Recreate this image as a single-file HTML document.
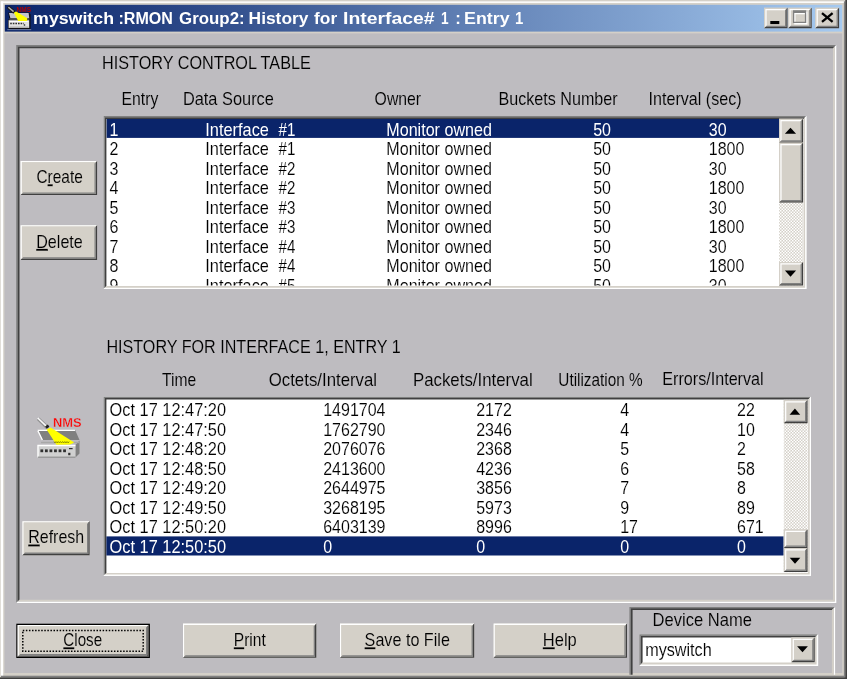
<!DOCTYPE html>
<html lang="en"><head><meta charset="utf-8"><title>myswitch :RMON Group2: History for Interface# 1 : Entry 1</title>
<style>
html,body{margin:0;padding:0;background:#d4d0c8;overflow:hidden}
body{width:847px;height:679px}
svg{display:block;font-family:"Liberation Sans",sans-serif;font-size:16px}
text{white-space:pre}
</style></head><body>
<svg width="847" height="679" viewBox="0 0 847 679">
<defs>
<linearGradient id="cap" x1="0" y1="0" x2="1" y2="0"><stop offset="0" stop-color="#0a246a"/><stop offset="1" stop-color="#a6caf0"/></linearGradient>
<pattern id="chk" width="3" height="3" patternUnits="userSpaceOnUse"><rect width="3" height="3" fill="#d4d0c8"/><rect width="1.5" height="1.5" fill="#fff"/><rect x="1.5" y="1.5" width="1.5" height="1.5" fill="#fff"/></pattern>
<filter id="soft" x="0" y="0" width="100%" height="100%" filterUnits="userSpaceOnUse" color-interpolation-filters="sRGB"><feGaussianBlur stdDeviation="0.28"/></filter>
</defs>
<g filter="url(#soft)">
<g id="window-frame">
<rect x="0" y="0" width="847" height="679" fill="#d4d0c8"/>
<rect x="0.9" y="1.4" width="844.3" height="1.5" fill="#ffffff"/>
<rect x="0.7" y="1.4" width="2.5" height="675.9" fill="#ffffff"/>
<rect x="843.9" y="1.3" width="1.4" height="676.1" fill="#808080"/>
<rect x="1" y="675.7" width="844.3" height="1.7" fill="#808080"/>
<rect x="845.3" y="0" width="1.7" height="679" fill="#404040"/>
<rect x="0" y="677.4" width="847" height="1.6" fill="#404040"/>
<rect x="4.5" y="33.4" width="837.7" height="639.6" fill="#bebcc0"/>
</g>
<g id="titlebar">
<rect x="4.8" y="4.8" width="837.4" height="26.8" fill="url(#cap)"/>
<rect x="764.1" y="7.7" width="23.4" height="20.5" fill="#d4d0c8"/>
<polygon points="764.1,7.7 787.5,7.7 786.25,8.95 765.35,8.95 765.35,26.95 764.1,28.2" fill="#d4d0c8"/>
<polygon points="787.5,7.7 787.5,28.2 764.1,28.2 765.35,26.95 786.25,26.95 786.25,8.95" fill="#404040"/>
<polygon points="765.35,8.95 786.25,8.95 785,10.2 766.6,10.2 766.6,25.7 765.35,26.95" fill="#ffffff"/>
<polygon points="786.25,8.95 786.25,26.95 765.35,26.95 766.6,25.7 785,25.7 785,10.2" fill="#808080"/>
<rect x="788.2" y="7.7" width="23.5" height="20.5" fill="#d4d0c8"/>
<polygon points="788.2,7.7 811.7,7.7 810.45,8.95 789.45,8.95 789.45,26.95 788.2,28.2" fill="#d4d0c8"/>
<polygon points="811.7,7.7 811.7,28.2 788.2,28.2 789.45,26.95 810.45,26.95 810.45,8.95" fill="#404040"/>
<polygon points="789.45,8.95 810.45,8.95 809.2,10.2 790.7,10.2 790.7,25.7 789.45,26.95" fill="#ffffff"/>
<polygon points="810.45,8.95 810.45,26.95 789.45,26.95 790.7,25.7 809.2,25.7 809.2,10.2" fill="#808080"/>
<rect x="815.3" y="7.7" width="23.8" height="20.5" fill="#d4d0c8"/>
<polygon points="815.3,7.7 839.1,7.7 837.85,8.95 816.55,8.95 816.55,26.95 815.3,28.2" fill="#d4d0c8"/>
<polygon points="839.1,7.7 839.1,28.2 815.3,28.2 816.55,26.95 837.85,26.95 837.85,8.95" fill="#404040"/>
<polygon points="816.55,8.95 837.85,8.95 836.6,10.2 817.8,10.2 817.8,25.7 816.55,26.95" fill="#ffffff"/>
<polygon points="837.85,8.95 837.85,26.95 816.55,26.95 817.8,25.7 836.6,25.7 836.6,10.2" fill="#808080"/>
<rect x="770.3" y="21" width="9" height="3.1" fill="#000"/>
<path d="M794.2 11.6H807.5V24.4H794.2Z M795.5 14.2V23.1H806.2V14.2Z" fill="#ffffff" fill-rule="evenodd"/>
<path d="M792.9 10.3H806.2V23.1H792.9Z M794.2 12.9V21.8H804.9V12.9Z" fill="#808080" fill-rule="evenodd"/>
<path d="M822 13.1L832.6 21.9M832.6 13.1L822 21.9" stroke="#000" stroke-width="2.3" fill="none"/>
<g id="title-icon">
<polygon points="8.2,12.4 29,12.4 30.6,14.5 30.6,28.9 9,28.9 8,27.5 8,20 9.4,18.8" fill="#101018"/>
<polygon points="9,12.9 28.6,12.9 29.3,18.3 10.4,18.3" fill="#c4c4cc"/>
<rect x="9.4" y="18.4" width="20" height="1.4" fill="#606060"/>
<rect x="8.6" y="20.2" width="20.6" height="7.7" fill="#e2e2e2"/>
<rect x="9.6" y="21" width="18.8" height="0.9" fill="#ffffff"/>
<path d="M10.2 23.5H23.8" stroke="#303030" stroke-width="1.3" stroke-dasharray="1.6 1" fill="none"/>
<rect x="23.8" y="24.3" width="1.4" height="1.4" fill="#303030"/>
<rect x="9.6" y="26.6" width="19" height="1.1" fill="#a8a8a8"/>
<polygon points="13.6,12.3 16.2,11.6 27.3,18.3 26.9,20.9 18.2,20.9" fill="#ffff00"/>
<path d="M7.9 6.9L14.4 12.4" stroke="#181818" stroke-width="3.4" fill="none"/>
<path d="M8.4 7.2L13.6 11.6" stroke="#b0b0b0" stroke-width="1.5" fill="none"/>
<rect x="7.3" y="29.3" width="23.9" height="0.8" fill="#8890a8"/>
<text transform="translate(16.6,11.9) scale(1,1.0)" font-size="7" fill="#b00000" textLength="14.4" lengthAdjust="spacingAndGlyphs" font-weight="bold">NMS</text>
</g>
<text y="24.1" font-weight="bold" fill="#fff" font-size="16"><tspan x="33.1" textLength="80.9" lengthAdjust="spacingAndGlyphs">myswitch</tspan> <tspan x="118.5" textLength="54.4" lengthAdjust="spacingAndGlyphs">:RMON</tspan> <tspan x="179.1" textLength="65.55" lengthAdjust="spacingAndGlyphs">Group2:</tspan> <tspan x="248.6" textLength="59.8" lengthAdjust="spacingAndGlyphs">History</tspan> <tspan x="314.1" textLength="23.05" lengthAdjust="spacingAndGlyphs">for</tspan> <tspan x="343.1" textLength="91.55" lengthAdjust="spacingAndGlyphs">Interface#</tspan> <tspan x="441.1" textLength="7.6" lengthAdjust="spacingAndGlyphs">1</tspan> <tspan x="455.35" textLength="5.55" lengthAdjust="spacingAndGlyphs">:</tspan> <tspan x="464.1" textLength="45.55" lengthAdjust="spacingAndGlyphs">Entry</tspan> <tspan x="514.9" textLength="8.3" lengthAdjust="spacingAndGlyphs">1</tspan></text>
</g>
<g id="main-panel">
<polygon points="16.2,45 836.3,45 834.8,46.5 17.7,46.5 17.7,601.5 16.2,603" fill="#808080"/>
<polygon points="836.3,45 836.3,603 16.2,603 17.7,601.5 834.8,601.5 834.8,46.5" fill="#ffffff"/>
<polygon points="17.7,46.5 834.8,46.5 833,48.3 19.5,48.3 19.5,599.7 17.7,601.5" fill="#404040"/>
<polygon points="834.8,46.5 834.8,601.5 17.7,601.5 19.5,599.7 833,599.7 833,48.3" fill="#d4d0c8"/>
</g>
<g id="history-control">
<text transform="translate(102,69.1) scale(1,1.19)" font-size="16" fill="#000" textLength="208.8" lengthAdjust="spacingAndGlyphs" stroke="#bebcc0" stroke-width="0.12">HISTORY CONTROL TABLE</text>
<text transform="translate(121.5,105) scale(1,1.19)" font-size="16" fill="#000" textLength="36.8" lengthAdjust="spacingAndGlyphs" stroke="#bebcc0" stroke-width="0.12">Entry</text>
<text transform="translate(182.9,105) scale(1,1.19)" font-size="16" fill="#000" textLength="91" lengthAdjust="spacingAndGlyphs" stroke="#bebcc0" stroke-width="0.12">Data Source</text>
<text transform="translate(374.6,105) scale(1,1.19)" font-size="16" fill="#000" textLength="46.5" lengthAdjust="spacingAndGlyphs" stroke="#bebcc0" stroke-width="0.12">Owner</text>
<text transform="translate(498.4,105) scale(1,1.19)" font-size="16" fill="#000" textLength="119.3" lengthAdjust="spacingAndGlyphs" stroke="#bebcc0" stroke-width="0.12">Buckets Number</text>
<text transform="translate(648.6,105) scale(1,1.19)" font-size="16" fill="#000" textLength="93" lengthAdjust="spacingAndGlyphs" stroke="#bebcc0" stroke-width="0.12">Interval (sec)</text>
<rect x="103.5" y="116" width="702.9" height="173" fill="#ffffff"/>
<polygon points="103.5,116 806.4,116 805.1,117.3 104.8,117.3 104.8,287.7 103.5,289" fill="#808080"/>
<polygon points="806.4,116 806.4,289 103.5,289 104.8,287.7 805.1,287.7 805.1,117.3" fill="#ffffff"/>
<polygon points="104.8,117.3 805.1,117.3 803.5,118.9 106.4,118.9 106.4,286.1 104.8,287.7" fill="#404040"/>
<polygon points="805.1,117.3 805.1,287.7 104.8,287.7 106.4,286.1 803.5,286.1 803.5,118.9" fill="#d4d0c8"/>
<clipPath id="c1"><rect x="106.4" y="118.8" width="672.7" height="166.59999999999997"/></clipPath>
<g clip-path="url(#c1)">
<rect x="106.4" y="118.8" width="672.7" height="19.1" fill="#0a246a"/>
<text transform="translate(109.6,135.6) scale(1,1.19)" font-size="16" fill="#fff">1</text>
<text transform="translate(205.3,135.6) scale(1,1.19)" font-size="16" fill="#fff" textLength="63.6" lengthAdjust="spacingAndGlyphs">Interface</text>
<text transform="translate(278.5,135.6) scale(1,1.19)" font-size="16" fill="#fff" textLength="16.8" lengthAdjust="spacingAndGlyphs">#1</text>
<text transform="translate(386.3,135.6) scale(1,1.19)" font-size="16" fill="#fff" textLength="105.6" lengthAdjust="spacingAndGlyphs">Monitor owned</text>
<text transform="translate(593.2,135.6) scale(1,1.19)" font-size="16" fill="#fff">50</text>
<text transform="translate(708.8,135.6) scale(1,1.19)" font-size="16" fill="#fff">30</text>
<text transform="translate(109.6,155.1) scale(1,1.19)" font-size="16" fill="#000" stroke="#ffffff" stroke-width="0.12">2</text>
<text transform="translate(205.3,155.1) scale(1,1.19)" font-size="16" fill="#000" textLength="63.6" lengthAdjust="spacingAndGlyphs" stroke="#ffffff" stroke-width="0.12">Interface</text>
<text transform="translate(278.5,155.1) scale(1,1.19)" font-size="16" fill="#000" textLength="16.8" lengthAdjust="spacingAndGlyphs" stroke="#ffffff" stroke-width="0.12">#1</text>
<text transform="translate(386.3,155.1) scale(1,1.19)" font-size="16" fill="#000" textLength="105.6" lengthAdjust="spacingAndGlyphs" stroke="#ffffff" stroke-width="0.12">Monitor owned</text>
<text transform="translate(593.2,155.1) scale(1,1.19)" font-size="16" fill="#000" stroke="#ffffff" stroke-width="0.12">50</text>
<text transform="translate(708.8,155.1) scale(1,1.19)" font-size="16" fill="#000" stroke="#ffffff" stroke-width="0.12">1800</text>
<text transform="translate(109.6,174.6) scale(1,1.19)" font-size="16" fill="#000" stroke="#ffffff" stroke-width="0.12">3</text>
<text transform="translate(205.3,174.6) scale(1,1.19)" font-size="16" fill="#000" textLength="63.6" lengthAdjust="spacingAndGlyphs" stroke="#ffffff" stroke-width="0.12">Interface</text>
<text transform="translate(278.5,174.6) scale(1,1.19)" font-size="16" fill="#000" textLength="16.8" lengthAdjust="spacingAndGlyphs" stroke="#ffffff" stroke-width="0.12">#2</text>
<text transform="translate(386.3,174.6) scale(1,1.19)" font-size="16" fill="#000" textLength="105.6" lengthAdjust="spacingAndGlyphs" stroke="#ffffff" stroke-width="0.12">Monitor owned</text>
<text transform="translate(593.2,174.6) scale(1,1.19)" font-size="16" fill="#000" stroke="#ffffff" stroke-width="0.12">50</text>
<text transform="translate(708.8,174.6) scale(1,1.19)" font-size="16" fill="#000" stroke="#ffffff" stroke-width="0.12">30</text>
<text transform="translate(109.6,194.1) scale(1,1.19)" font-size="16" fill="#000" stroke="#ffffff" stroke-width="0.12">4</text>
<text transform="translate(205.3,194.1) scale(1,1.19)" font-size="16" fill="#000" textLength="63.6" lengthAdjust="spacingAndGlyphs" stroke="#ffffff" stroke-width="0.12">Interface</text>
<text transform="translate(278.5,194.1) scale(1,1.19)" font-size="16" fill="#000" textLength="16.8" lengthAdjust="spacingAndGlyphs" stroke="#ffffff" stroke-width="0.12">#2</text>
<text transform="translate(386.3,194.1) scale(1,1.19)" font-size="16" fill="#000" textLength="105.6" lengthAdjust="spacingAndGlyphs" stroke="#ffffff" stroke-width="0.12">Monitor owned</text>
<text transform="translate(593.2,194.1) scale(1,1.19)" font-size="16" fill="#000" stroke="#ffffff" stroke-width="0.12">50</text>
<text transform="translate(708.8,194.1) scale(1,1.19)" font-size="16" fill="#000" stroke="#ffffff" stroke-width="0.12">1800</text>
<text transform="translate(109.6,213.6) scale(1,1.19)" font-size="16" fill="#000" stroke="#ffffff" stroke-width="0.12">5</text>
<text transform="translate(205.3,213.6) scale(1,1.19)" font-size="16" fill="#000" textLength="63.6" lengthAdjust="spacingAndGlyphs" stroke="#ffffff" stroke-width="0.12">Interface</text>
<text transform="translate(278.5,213.6) scale(1,1.19)" font-size="16" fill="#000" textLength="16.8" lengthAdjust="spacingAndGlyphs" stroke="#ffffff" stroke-width="0.12">#3</text>
<text transform="translate(386.3,213.6) scale(1,1.19)" font-size="16" fill="#000" textLength="105.6" lengthAdjust="spacingAndGlyphs" stroke="#ffffff" stroke-width="0.12">Monitor owned</text>
<text transform="translate(593.2,213.6) scale(1,1.19)" font-size="16" fill="#000" stroke="#ffffff" stroke-width="0.12">50</text>
<text transform="translate(708.8,213.6) scale(1,1.19)" font-size="16" fill="#000" stroke="#ffffff" stroke-width="0.12">30</text>
<text transform="translate(109.6,233.1) scale(1,1.19)" font-size="16" fill="#000" stroke="#ffffff" stroke-width="0.12">6</text>
<text transform="translate(205.3,233.1) scale(1,1.19)" font-size="16" fill="#000" textLength="63.6" lengthAdjust="spacingAndGlyphs" stroke="#ffffff" stroke-width="0.12">Interface</text>
<text transform="translate(278.5,233.1) scale(1,1.19)" font-size="16" fill="#000" textLength="16.8" lengthAdjust="spacingAndGlyphs" stroke="#ffffff" stroke-width="0.12">#3</text>
<text transform="translate(386.3,233.1) scale(1,1.19)" font-size="16" fill="#000" textLength="105.6" lengthAdjust="spacingAndGlyphs" stroke="#ffffff" stroke-width="0.12">Monitor owned</text>
<text transform="translate(593.2,233.1) scale(1,1.19)" font-size="16" fill="#000" stroke="#ffffff" stroke-width="0.12">50</text>
<text transform="translate(708.8,233.1) scale(1,1.19)" font-size="16" fill="#000" stroke="#ffffff" stroke-width="0.12">1800</text>
<text transform="translate(109.6,252.6) scale(1,1.19)" font-size="16" fill="#000" stroke="#ffffff" stroke-width="0.12">7</text>
<text transform="translate(205.3,252.6) scale(1,1.19)" font-size="16" fill="#000" textLength="63.6" lengthAdjust="spacingAndGlyphs" stroke="#ffffff" stroke-width="0.12">Interface</text>
<text transform="translate(278.5,252.6) scale(1,1.19)" font-size="16" fill="#000" textLength="16.8" lengthAdjust="spacingAndGlyphs" stroke="#ffffff" stroke-width="0.12">#4</text>
<text transform="translate(386.3,252.6) scale(1,1.19)" font-size="16" fill="#000" textLength="105.6" lengthAdjust="spacingAndGlyphs" stroke="#ffffff" stroke-width="0.12">Monitor owned</text>
<text transform="translate(593.2,252.6) scale(1,1.19)" font-size="16" fill="#000" stroke="#ffffff" stroke-width="0.12">50</text>
<text transform="translate(708.8,252.6) scale(1,1.19)" font-size="16" fill="#000" stroke="#ffffff" stroke-width="0.12">30</text>
<text transform="translate(109.6,272.1) scale(1,1.19)" font-size="16" fill="#000" stroke="#ffffff" stroke-width="0.12">8</text>
<text transform="translate(205.3,272.1) scale(1,1.19)" font-size="16" fill="#000" textLength="63.6" lengthAdjust="spacingAndGlyphs" stroke="#ffffff" stroke-width="0.12">Interface</text>
<text transform="translate(278.5,272.1) scale(1,1.19)" font-size="16" fill="#000" textLength="16.8" lengthAdjust="spacingAndGlyphs" stroke="#ffffff" stroke-width="0.12">#4</text>
<text transform="translate(386.3,272.1) scale(1,1.19)" font-size="16" fill="#000" textLength="105.6" lengthAdjust="spacingAndGlyphs" stroke="#ffffff" stroke-width="0.12">Monitor owned</text>
<text transform="translate(593.2,272.1) scale(1,1.19)" font-size="16" fill="#000" stroke="#ffffff" stroke-width="0.12">50</text>
<text transform="translate(708.8,272.1) scale(1,1.19)" font-size="16" fill="#000" stroke="#ffffff" stroke-width="0.12">1800</text>
<text transform="translate(109.6,291.6) scale(1,1.19)" font-size="16" fill="#000" stroke="#ffffff" stroke-width="0.12">9</text>
<text transform="translate(205.3,291.6) scale(1,1.19)" font-size="16" fill="#000" textLength="63.6" lengthAdjust="spacingAndGlyphs" stroke="#ffffff" stroke-width="0.12">Interface</text>
<text transform="translate(278.5,291.6) scale(1,1.19)" font-size="16" fill="#000" textLength="16.8" lengthAdjust="spacingAndGlyphs" stroke="#ffffff" stroke-width="0.12">#5</text>
<text transform="translate(386.3,291.6) scale(1,1.19)" font-size="16" fill="#000" textLength="105.6" lengthAdjust="spacingAndGlyphs" stroke="#ffffff" stroke-width="0.12">Monitor owned</text>
<text transform="translate(593.2,291.6) scale(1,1.19)" font-size="16" fill="#000" stroke="#ffffff" stroke-width="0.12">50</text>
<text transform="translate(708.8,291.6) scale(1,1.19)" font-size="16" fill="#000" stroke="#ffffff" stroke-width="0.12">30</text>
</g>
<rect x="779.1" y="118.8" width="24" height="166.6" fill="url(#chk)"/>
<rect x="779.1" y="118.8" width="24" height="23.9" fill="#d4d0c8"/>
<polygon points="779.1,118.8 803.1,118.8 801.85,120.05 780.35,120.05 780.35,141.45 779.1,142.7" fill="#d4d0c8"/>
<polygon points="803.1,118.8 803.1,142.7 779.1,142.7 780.35,141.45 801.85,141.45 801.85,120.05" fill="#404040"/>
<polygon points="780.35,120.05 801.85,120.05 800.6,121.3 781.6,121.3 781.6,140.2 780.35,141.45" fill="#ffffff"/>
<polygon points="801.85,120.05 801.85,141.45 780.35,141.45 781.6,140.2 800.6,140.2 800.6,121.3" fill="#808080"/>
<polygon points="790.5,127.7 796.1,133.8 784.9,133.8" fill="#000"/>
<rect x="779.1" y="142.7" width="24" height="59.7" fill="#d4d0c8"/>
<polygon points="779.1,142.7 803.1,142.7 801.85,143.95 780.35,143.95 780.35,201.15 779.1,202.4" fill="#d4d0c8"/>
<polygon points="803.1,142.7 803.1,202.4 779.1,202.4 780.35,201.15 801.85,201.15 801.85,143.95" fill="#404040"/>
<polygon points="780.35,143.95 801.85,143.95 800.6,145.2 781.6,145.2 781.6,199.9 780.35,201.15" fill="#ffffff"/>
<polygon points="801.85,143.95 801.85,201.15 780.35,201.15 781.6,199.9 800.6,199.9 800.6,145.2" fill="#808080"/>
<rect x="779.1" y="262" width="24" height="23.4" fill="#d4d0c8"/>
<polygon points="779.1,262 803.1,262 801.85,263.25 780.35,263.25 780.35,284.15 779.1,285.4" fill="#d4d0c8"/>
<polygon points="803.1,262 803.1,285.4 779.1,285.4 780.35,284.15 801.85,284.15 801.85,263.25" fill="#404040"/>
<polygon points="780.35,263.25 801.85,263.25 800.6,264.5 781.6,264.5 781.6,282.9 780.35,284.15" fill="#ffffff"/>
<polygon points="801.85,263.25 801.85,284.15 780.35,284.15 781.6,282.9 800.6,282.9 800.6,264.5" fill="#808080"/>
<polygon points="784.9,270.6 796.1,270.6 790.5,276.8" fill="#000"/>
</g>
<g id="side-buttons">
<rect x="20.6" y="160.9" width="76.5" height="34.2" fill="#d4d0c8"/>
<polygon points="20.6,160.9 97.1,160.9 95.8,162.2 21.9,162.2 21.9,193.8 20.6,195.1" fill="#ffffff"/>
<polygon points="97.1,160.9 97.1,195.1 20.6,195.1 21.9,193.8 95.8,193.8 95.8,162.2" fill="#404040"/>
<polygon points="21.9,162.2 95.8,162.2 94.5,163.5 23.2,163.5 23.2,192.5 21.9,193.8" fill="#d4d0c8"/>
<polygon points="95.8,162.2 95.8,193.8 21.9,193.8 23.2,192.5 94.5,192.5 94.5,163.5" fill="#808080"/>
<text transform="translate(36.4,183.2) scale(1,1.19)" font-size="16" fill="#000" textLength="46.4" lengthAdjust="spacingAndGlyphs" stroke="#d4d0c8" stroke-width="0.12">C<tspan text-decoration="underline">r</tspan>eate</text>
<rect x="20.6" y="225.2" width="76.5" height="34.7" fill="#d4d0c8"/>
<polygon points="20.6,225.2 97.1,225.2 95.8,226.5 21.9,226.5 21.9,258.6 20.6,259.9" fill="#ffffff"/>
<polygon points="97.1,225.2 97.1,259.9 20.6,259.9 21.9,258.6 95.8,258.6 95.8,226.5" fill="#404040"/>
<polygon points="21.9,226.5 95.8,226.5 94.5,227.8 23.2,227.8 23.2,257.3 21.9,258.6" fill="#d4d0c8"/>
<polygon points="95.8,226.5 95.8,258.6 21.9,258.6 23.2,257.3 94.5,257.3 94.5,227.8" fill="#808080"/>
<text transform="translate(36.2,247.8) scale(1,1.19)" font-size="16" fill="#000" textLength="46.6" lengthAdjust="spacingAndGlyphs" stroke="#d4d0c8" stroke-width="0.12"><tspan text-decoration="underline">D</tspan>elete</text>
<rect x="22.4" y="521.3" width="67.2" height="33.9" fill="#d4d0c8"/>
<polygon points="22.4,521.3 89.6,521.3 88.3,522.6 23.7,522.6 23.7,553.9 22.4,555.2" fill="#ffffff"/>
<polygon points="89.6,521.3 89.6,555.2 22.4,555.2 23.7,553.9 88.3,553.9 88.3,522.6" fill="#404040"/>
<polygon points="23.7,522.6 88.3,522.6 87,523.9 25,523.9 25,552.6 23.7,553.9" fill="#d4d0c8"/>
<polygon points="88.3,522.6 88.3,553.9 23.7,553.9 25,552.6 87,552.6 87,523.9" fill="#808080"/>
<text transform="translate(28.2,543.4) scale(1,1.19)" font-size="16" fill="#000" textLength="56" lengthAdjust="spacingAndGlyphs" stroke="#d4d0c8" stroke-width="0.12"><tspan text-decoration="underline">R</tspan>efresh</text>
</g>
<g id="history-data">
<text transform="translate(106.4,352.7) scale(1,1.19)" font-size="16" fill="#000" textLength="294.3" lengthAdjust="spacingAndGlyphs" stroke="#bebcc0" stroke-width="0.12">HISTORY FOR INTERFACE 1, ENTRY 1</text>
<text transform="translate(162,385.8) scale(1,1.19)" font-size="16" fill="#000" textLength="34.2" lengthAdjust="spacingAndGlyphs" stroke="#bebcc0" stroke-width="0.12">Time</text>
<text transform="translate(268.7,385.8) scale(1,1.19)" font-size="16" fill="#000" textLength="108.4" lengthAdjust="spacingAndGlyphs" stroke="#bebcc0" stroke-width="0.12">Octets/Interval</text>
<text transform="translate(412.9,385.8) scale(1,1.19)" font-size="16" fill="#000" textLength="119.8" lengthAdjust="spacingAndGlyphs" stroke="#bebcc0" stroke-width="0.12">Packets/Interval</text>
<text transform="translate(558.3,385.8) scale(1,1.19)" font-size="16" fill="#000" textLength="84.4" lengthAdjust="spacingAndGlyphs" stroke="#bebcc0" stroke-width="0.12">Utilization %</text>
<text transform="translate(662.3,384.5) scale(1,1.19)" font-size="16" fill="#000" textLength="101.3" lengthAdjust="spacingAndGlyphs" stroke="#bebcc0" stroke-width="0.12">Errors/Interval</text>
<rect x="103.5" y="396.7" width="707.5" height="179.1" fill="#ffffff"/>
<polygon points="103.5,396.7 811,396.7 809.7,398 104.8,398 104.8,574.5 103.5,575.8" fill="#808080"/>
<polygon points="811,396.7 811,575.8 103.5,575.8 104.8,574.5 809.7,574.5 809.7,398" fill="#ffffff"/>
<polygon points="104.8,398 809.7,398 808.1,399.6 106.4,399.6 106.4,572.9 104.8,574.5" fill="#404040"/>
<polygon points="809.7,398 809.7,574.5 104.8,574.5 106.4,572.9 808.1,572.9 808.1,399.6" fill="#d4d0c8"/>
<text transform="translate(109.6,416.4) scale(1,1.19)" font-size="16" fill="#000" textLength="116.4" lengthAdjust="spacingAndGlyphs" stroke="#ffffff" stroke-width="0.12">Oct 17 12:47:20</text>
<text transform="translate(323.2,416.4) scale(1,1.19)" font-size="16" fill="#000" stroke="#ffffff" stroke-width="0.12">1491704</text>
<text transform="translate(476.2,416.4) scale(1,1.19)" font-size="16" fill="#000" stroke="#ffffff" stroke-width="0.12">2172</text>
<text transform="translate(620.2,416.4) scale(1,1.19)" font-size="16" fill="#000" stroke="#ffffff" stroke-width="0.12">4</text>
<text transform="translate(737,416.4) scale(1,1.19)" font-size="16" fill="#000" stroke="#ffffff" stroke-width="0.12">22</text>
<text transform="translate(109.6,435.9) scale(1,1.19)" font-size="16" fill="#000" textLength="116.4" lengthAdjust="spacingAndGlyphs" stroke="#ffffff" stroke-width="0.12">Oct 17 12:47:50</text>
<text transform="translate(323.2,435.9) scale(1,1.19)" font-size="16" fill="#000" stroke="#ffffff" stroke-width="0.12">1762790</text>
<text transform="translate(476.2,435.9) scale(1,1.19)" font-size="16" fill="#000" stroke="#ffffff" stroke-width="0.12">2346</text>
<text transform="translate(620.2,435.9) scale(1,1.19)" font-size="16" fill="#000" stroke="#ffffff" stroke-width="0.12">4</text>
<text transform="translate(737,435.9) scale(1,1.19)" font-size="16" fill="#000" stroke="#ffffff" stroke-width="0.12">10</text>
<text transform="translate(109.6,455.4) scale(1,1.19)" font-size="16" fill="#000" textLength="116.4" lengthAdjust="spacingAndGlyphs" stroke="#ffffff" stroke-width="0.12">Oct 17 12:48:20</text>
<text transform="translate(323.2,455.4) scale(1,1.19)" font-size="16" fill="#000" stroke="#ffffff" stroke-width="0.12">2076076</text>
<text transform="translate(476.2,455.4) scale(1,1.19)" font-size="16" fill="#000" stroke="#ffffff" stroke-width="0.12">2368</text>
<text transform="translate(620.2,455.4) scale(1,1.19)" font-size="16" fill="#000" stroke="#ffffff" stroke-width="0.12">5</text>
<text transform="translate(737,455.4) scale(1,1.19)" font-size="16" fill="#000" stroke="#ffffff" stroke-width="0.12">2</text>
<text transform="translate(109.6,474.9) scale(1,1.19)" font-size="16" fill="#000" textLength="116.4" lengthAdjust="spacingAndGlyphs" stroke="#ffffff" stroke-width="0.12">Oct 17 12:48:50</text>
<text transform="translate(323.2,474.9) scale(1,1.19)" font-size="16" fill="#000" stroke="#ffffff" stroke-width="0.12">2413600</text>
<text transform="translate(476.2,474.9) scale(1,1.19)" font-size="16" fill="#000" stroke="#ffffff" stroke-width="0.12">4236</text>
<text transform="translate(620.2,474.9) scale(1,1.19)" font-size="16" fill="#000" stroke="#ffffff" stroke-width="0.12">6</text>
<text transform="translate(737,474.9) scale(1,1.19)" font-size="16" fill="#000" stroke="#ffffff" stroke-width="0.12">58</text>
<text transform="translate(109.6,494.4) scale(1,1.19)" font-size="16" fill="#000" textLength="116.4" lengthAdjust="spacingAndGlyphs" stroke="#ffffff" stroke-width="0.12">Oct 17 12:49:20</text>
<text transform="translate(323.2,494.4) scale(1,1.19)" font-size="16" fill="#000" stroke="#ffffff" stroke-width="0.12">2644975</text>
<text transform="translate(476.2,494.4) scale(1,1.19)" font-size="16" fill="#000" stroke="#ffffff" stroke-width="0.12">3856</text>
<text transform="translate(620.2,494.4) scale(1,1.19)" font-size="16" fill="#000" stroke="#ffffff" stroke-width="0.12">7</text>
<text transform="translate(737,494.4) scale(1,1.19)" font-size="16" fill="#000" stroke="#ffffff" stroke-width="0.12">8</text>
<text transform="translate(109.6,513.9) scale(1,1.19)" font-size="16" fill="#000" textLength="116.4" lengthAdjust="spacingAndGlyphs" stroke="#ffffff" stroke-width="0.12">Oct 17 12:49:50</text>
<text transform="translate(323.2,513.9) scale(1,1.19)" font-size="16" fill="#000" stroke="#ffffff" stroke-width="0.12">3268195</text>
<text transform="translate(476.2,513.9) scale(1,1.19)" font-size="16" fill="#000" stroke="#ffffff" stroke-width="0.12">5973</text>
<text transform="translate(620.2,513.9) scale(1,1.19)" font-size="16" fill="#000" stroke="#ffffff" stroke-width="0.12">9</text>
<text transform="translate(737,513.9) scale(1,1.19)" font-size="16" fill="#000" stroke="#ffffff" stroke-width="0.12">89</text>
<text transform="translate(109.6,533.4) scale(1,1.19)" font-size="16" fill="#000" textLength="116.4" lengthAdjust="spacingAndGlyphs" stroke="#ffffff" stroke-width="0.12">Oct 17 12:50:20</text>
<text transform="translate(323.2,533.4) scale(1,1.19)" font-size="16" fill="#000" stroke="#ffffff" stroke-width="0.12">6403139</text>
<text transform="translate(476.2,533.4) scale(1,1.19)" font-size="16" fill="#000" stroke="#ffffff" stroke-width="0.12">8996</text>
<text transform="translate(620.2,533.4) scale(1,1.19)" font-size="16" fill="#000" stroke="#ffffff" stroke-width="0.12">17</text>
<text transform="translate(737,533.4) scale(1,1.19)" font-size="16" fill="#000" stroke="#ffffff" stroke-width="0.12">671</text>
<rect x="106.4" y="536.4" width="677.4" height="19.1" fill="#0a246a"/>
<text transform="translate(109.6,552.9) scale(1,1.19)" font-size="16" fill="#fff" textLength="116.4" lengthAdjust="spacingAndGlyphs">Oct 17 12:50:50</text>
<text transform="translate(323.2,552.9) scale(1,1.19)" font-size="16" fill="#fff">0</text>
<text transform="translate(476.2,552.9) scale(1,1.19)" font-size="16" fill="#fff">0</text>
<text transform="translate(620.2,552.9) scale(1,1.19)" font-size="16" fill="#fff">0</text>
<text transform="translate(737,552.9) scale(1,1.19)" font-size="16" fill="#fff">0</text>
<rect x="783.8" y="399.9" width="23.7" height="172.2" fill="url(#chk)"/>
<rect x="783.8" y="399.9" width="23.7" height="23.4" fill="#d4d0c8"/>
<polygon points="783.8,399.9 807.5,399.9 806.25,401.15 785.05,401.15 785.05,422.05 783.8,423.3" fill="#d4d0c8"/>
<polygon points="807.5,399.9 807.5,423.3 783.8,423.3 785.05,422.05 806.25,422.05 806.25,401.15" fill="#404040"/>
<polygon points="785.05,401.15 806.25,401.15 805,402.4 786.3,402.4 786.3,420.8 785.05,422.05" fill="#ffffff"/>
<polygon points="806.25,401.15 806.25,422.05 785.05,422.05 786.3,420.8 805,420.8 805,402.4" fill="#808080"/>
<polygon points="794.9,408.5 800.2,414.8 789.6,414.8" fill="#000"/>
<rect x="783.8" y="529.4" width="23.7" height="18.7" fill="#d4d0c8"/>
<polygon points="783.8,529.4 807.5,529.4 806.25,530.65 785.05,530.65 785.05,546.85 783.8,548.1" fill="#d4d0c8"/>
<polygon points="807.5,529.4 807.5,548.1 783.8,548.1 785.05,546.85 806.25,546.85 806.25,530.65" fill="#404040"/>
<polygon points="785.05,530.65 806.25,530.65 805,531.9 786.3,531.9 786.3,545.6 785.05,546.85" fill="#ffffff"/>
<polygon points="806.25,530.65 806.25,546.85 785.05,546.85 786.3,545.6 805,545.6 805,531.9" fill="#808080"/>
<rect x="783.8" y="548.1" width="23.7" height="24" fill="#d4d0c8"/>
<polygon points="783.8,548.1 807.5,548.1 806.25,549.35 785.05,549.35 785.05,570.85 783.8,572.1" fill="#d4d0c8"/>
<polygon points="807.5,548.1 807.5,572.1 783.8,572.1 785.05,570.85 806.25,570.85 806.25,549.35" fill="#404040"/>
<polygon points="785.05,549.35 806.25,549.35 805,550.6 786.3,550.6 786.3,569.6 785.05,570.85" fill="#ffffff"/>
<polygon points="806.25,549.35 806.25,570.85 785.05,570.85 786.3,569.6 805,569.6 805,550.6" fill="#808080"/>
<polygon points="789.7,557.7 800.3,557.7 795,563.8" fill="#000"/>
</g>
<g id="nms-icon">
<polygon points="37.4,430.2 75.2,430.2 79.5,440 42.3,440" fill="#808080"/>
<path d="M37.6 430.4H75M37.8 430.6L42.4 440" stroke="#fff" stroke-width="1.3" fill="none"/>
<polygon points="75.4,444.9 79.5,440.6 79.5,453.4 75.4,457.6" fill="#808080"/>
<rect x="37.4" y="444.9" width="38" height="12.7" fill="#d0d0d0"/>
<path d="M37.4 445.5H75.4M38 445V457.4" stroke="#fff" stroke-width="1.3" fill="none"/>
<rect x="37.8" y="456.6" width="37.6" height="1.2" fill="#909090"/>
<rect x="41" y="441.8" width="38" height="1.4" fill="#a8a8a8"/>
<rect x="40.4" y="449.4" width="2.8" height="2.8" fill="#303030"/>
<rect x="44.95" y="449.4" width="2.8" height="2.8" fill="#303030"/>
<rect x="49.5" y="449.4" width="2.8" height="2.8" fill="#303030"/>
<rect x="54.05" y="449.4" width="2.8" height="2.8" fill="#303030"/>
<rect x="58.6" y="449.4" width="2.8" height="2.8" fill="#303030"/>
<rect x="63.15" y="449.4" width="2.8" height="2.8" fill="#303030"/>
<rect x="69" y="448" width="3.6" height="1.2" fill="#303030"/>
<rect x="68.2" y="452.8" width="2.2" height="2.4" fill="#303030"/>
<polygon points="46.6,429.6 50.6,427.4 74.2,442.4 70,444.6 56.4,444.8" fill="#ffff00"/>
<path d="M54 441.5l1 1.5 1-1.5 1.2 1.5 1-1.5 1.2 1.5 1-1.5 1.2 1.5 1-1.5 1.2 1.5 1-1.5 1.2 1.5 1-1.5 1.2 1.5 1-1.5" stroke="#808000" stroke-width=".8" fill="none"/>
<path d="M38.2 418.8L47.4 427.6" stroke="#909090" stroke-width="3.6" fill="none"/>
<path d="M37.8 418.0L46 425.8" stroke="#f8f8f8" stroke-width="1.7" fill="none"/>
<path d="M46 427.6L48.6 425.6" stroke="#202020" stroke-width="2.6" fill="none"/>
<text transform="translate(53,427) scale(1,1.0)" font-size="13" fill="#ff0000" textLength="28.6" lengthAdjust="spacingAndGlyphs" font-weight="bold" stroke="#bebcc0" stroke-width="0.35">NMS</text>
</g>
<g id="bottom-buttons">
<rect x="16.3" y="623.7" width="133.6" height="34.3" fill="#000"/>
<rect x="17.6" y="625" width="131" height="31.7" fill="#d4d0c8"/>
<polygon points="17.6,625 148.6,625 147.3,626.3 18.9,626.3 18.9,655.4 17.6,656.7" fill="#ffffff"/>
<polygon points="148.6,625 148.6,656.7 17.6,656.7 18.9,655.4 147.3,655.4 147.3,626.3" fill="#404040"/>
<polygon points="18.9,626.3 147.3,626.3 146,627.6 20.2,627.6 20.2,654.1 18.9,655.4" fill="#d4d0c8"/>
<polygon points="147.3,626.3 147.3,655.4 18.9,655.4 20.2,654.1 146,654.1 146,627.6" fill="#808080"/>
<rect x="22.8" y="630.5" width="120.4" height="20.7" fill="none" stroke="#000" stroke-width="1.5" stroke-dasharray="1.5 1.57" stroke-dashoffset="0"/>
<text transform="translate(63.3,646.2) scale(1,1.19)" font-size="16" fill="#000" textLength="38.8" lengthAdjust="spacingAndGlyphs" stroke="#d4d0c8" stroke-width="0.12"><tspan text-decoration="underline">C</tspan>lose</text>
<rect x="183" y="623.6" width="133.3" height="34.2" fill="#d4d0c8"/>
<polygon points="183,623.6 316.3,623.6 315,624.9 184.3,624.9 184.3,656.5 183,657.8" fill="#ffffff"/>
<polygon points="316.3,623.6 316.3,657.8 183,657.8 184.3,656.5 315,656.5 315,624.9" fill="#404040"/>
<polygon points="184.3,624.9 315,624.9 313.7,626.2 185.6,626.2 185.6,655.2 184.3,656.5" fill="#d4d0c8"/>
<polygon points="315,624.9 315,656.5 184.3,656.5 185.6,655.2 313.7,655.2 313.7,626.2" fill="#808080"/>
<text transform="translate(233.8,646.2) scale(1,1.19)" font-size="16" fill="#000" textLength="32" lengthAdjust="spacingAndGlyphs" stroke="#d4d0c8" stroke-width="0.12"><tspan text-decoration="underline">P</tspan>rint</text>
<rect x="340" y="623.6" width="134.2" height="34.2" fill="#d4d0c8"/>
<polygon points="340,623.6 474.2,623.6 472.9,624.9 341.3,624.9 341.3,656.5 340,657.8" fill="#ffffff"/>
<polygon points="474.2,623.6 474.2,657.8 340,657.8 341.3,656.5 472.9,656.5 472.9,624.9" fill="#404040"/>
<polygon points="341.3,624.9 472.9,624.9 471.6,626.2 342.6,626.2 342.6,655.2 341.3,656.5" fill="#d4d0c8"/>
<polygon points="472.9,624.9 472.9,656.5 341.3,656.5 342.6,655.2 471.6,655.2 471.6,626.2" fill="#808080"/>
<text transform="translate(364.6,646.2) scale(1,1.19)" font-size="16" fill="#000" textLength="85.3" lengthAdjust="spacingAndGlyphs" stroke="#d4d0c8" stroke-width="0.12"><tspan text-decoration="underline">S</tspan>ave to File</text>
<rect x="493.6" y="623.6" width="133.4" height="34.2" fill="#d4d0c8"/>
<polygon points="493.6,623.6 627,623.6 625.7,624.9 494.9,624.9 494.9,656.5 493.6,657.8" fill="#ffffff"/>
<polygon points="627,623.6 627,657.8 493.6,657.8 494.9,656.5 625.7,656.5 625.7,624.9" fill="#404040"/>
<polygon points="494.9,624.9 625.7,624.9 624.4,626.2 496.2,626.2 496.2,655.2 494.9,656.5" fill="#d4d0c8"/>
<polygon points="625.7,624.9 625.7,656.5 494.9,656.5 496.2,655.2 624.4,655.2 624.4,626.2" fill="#808080"/>
<text transform="translate(542.8,646.2) scale(1,1.19)" font-size="16" fill="#000" textLength="34" lengthAdjust="spacingAndGlyphs" stroke="#d4d0c8" stroke-width="0.12"><tspan text-decoration="underline">H</tspan>elp</text>
</g>
<g id="device-name">
<clipPath id="cdev"><rect x="4.3" y="600" width="837.9" height="674.8" transform="translate(0,-600)"/></clipPath>
<g clip-path="url(#cdev)">
<polygon points="629.4,606.9 835.1,606.9 833.7,608.3 630.8,608.3 630.8,688.6 629.4,690" fill="#808080"/>
<polygon points="835.1,606.9 835.1,690 629.4,690 630.8,688.6 833.7,688.6 833.7,608.3" fill="#ffffff"/>
<polygon points="630.8,608.3 833.7,608.3 831.9,610.1 632.6,610.1 632.6,686.8 630.8,688.6" fill="#404040"/>
<polygon points="833.7,608.3 833.7,688.6 630.8,688.6 632.6,686.8 831.9,686.8 831.9,610.1" fill="#d4d0c8"/>
</g>
<text transform="translate(652.6,626.4) scale(1,1.19)" font-size="16" fill="#000" textLength="99.4" lengthAdjust="spacingAndGlyphs" stroke="#bebcc0" stroke-width="0.12">Device Name</text>
<rect x="639.3" y="634.2" width="178.8" height="31.7" fill="#ffffff"/>
<polygon points="639.3,634.2 818.1,634.2 816.6,635.7 640.8,635.7 640.8,664.4 639.3,665.9" fill="#808080"/>
<polygon points="818.1,634.2 818.1,665.9 639.3,665.9 640.8,664.4 816.6,664.4 816.6,635.7" fill="#ffffff"/>
<polygon points="640.8,635.7 816.6,635.7 814.8,637.5 642.6,637.5 642.6,662.6 640.8,664.4" fill="#404040"/>
<polygon points="816.6,635.7 816.6,664.4 640.8,664.4 642.6,662.6 814.8,662.6 814.8,637.5" fill="#d4d0c8"/>
<rect x="791.4" y="637.5" width="23.3" height="24.8" fill="#d4d0c8"/>
<polygon points="791.4,637.5 814.7,637.5 813.45,638.75 792.65,638.75 792.65,661.05 791.4,662.3" fill="#d4d0c8"/>
<polygon points="814.7,637.5 814.7,662.3 791.4,662.3 792.65,661.05 813.45,661.05 813.45,638.75" fill="#404040"/>
<polygon points="792.65,638.75 813.45,638.75 812.2,640 793.9,640 793.9,659.8 792.65,661.05" fill="#ffffff"/>
<polygon points="813.45,638.75 813.45,661.05 792.65,661.05 793.9,659.8 812.2,659.8 812.2,640" fill="#808080"/>
<polygon points="797.1,646.2 807.9,646.2 802.5,652.3" fill="#000"/>
<text transform="translate(645.2,655.7) scale(1,1.12)" font-size="16" fill="#000" textLength="66.5" lengthAdjust="spacingAndGlyphs" stroke="#ffffff" stroke-width="0.12">myswitch</text>
</g>
</g>
</svg>
</body></html>
